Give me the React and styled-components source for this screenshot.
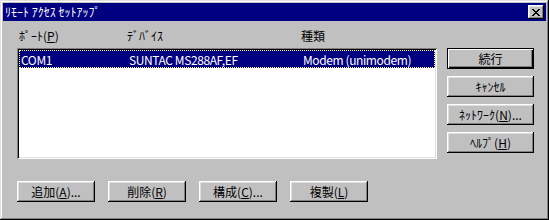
import React from 'react';
import styled, { createGlobalStyle } from 'styled-components';

const GlobalStyle = createGlobalStyle`
  html, body {
    margin: 0;
    padding: 0;
    background: #c0c0c0;
  }
  body {
    font-family: "Noto Sans CJK JP", "Noto Sans", sans-serif;
    font-size: 12px;
    color: #000;
  }
`;

const Window = styled.div`
  width: 549px;
  height: 220px;
  box-sizing: border-box;
  padding: 3px;
  background: #c0c0c0;
  box-shadow: inset -1px -1px #000, inset 1px 1px #dfdfdf,
    inset -2px -2px #808080, inset 2px 2px #fff;
  display: flex;
  flex-direction: column;
`;

const TitleBar = styled.div`
  height: 18px;
  background: #000080;
  color: #fff;
  display: flex;
  align-items: center;
  justify-content: space-between;
  padding: 0 2px;
  line-height: 18px;
`;

const TitleText = styled.span`
  font-size: 12px;
`;

const CloseButton = styled.div`
  width: 16px;
  height: 14px;
  background: #c0c0c0;
  box-shadow: inset -1px -1px #000, inset 1px 1px #fff,
    inset -2px -2px #808080, inset 2px 2px #dfdfdf;
  display: flex;
  align-items: center;
  justify-content: center;
`;

const Body = styled.div`
  padding-left: 14px;
  display: flex;
  flex-direction: column;
`;

const Columns = styled.div`
  display: grid;
  grid-template-columns: 108px 174px 1fr;
  white-space: nowrap;
`;

const Header = styled(Columns)`
  height: 27px;
  box-sizing: border-box;
  padding: 8px 0 0 2px;
  line-height: 14px;
`;

const Main = styled.div`
  display: flex;
  gap: 10px;
`;

const ListBox = styled.div`
  width: 420px;
  height: 111px;
  box-sizing: border-box;
  padding: 2px;
  background: #fff;
  box-shadow: inset 1px 1px #808080, inset -1px -1px #fff,
    inset 2px 2px #000, inset -2px -2px #dfdfdf;
`;

const Row = styled(Columns)`
  height: 18px;
  box-sizing: border-box;
  padding-left: 1px;
  align-items: center;
  letter-spacing: -0.4px;
  background: ${p => (p.selected ? '#000080' : 'transparent')};
  color: ${p => (p.selected ? '#fff' : '#000')};
  border: 1px dotted ${p => (p.selected ? '#ffff80' : 'transparent')};
`;

const SideButtons = styled.div`
  display: flex;
  flex-direction: column;
  gap: 7px;
`;

const Button = styled.div`
  width: ${p => p.width || 87}px;
  height: 21px;
  box-sizing: border-box;
  background: #c0c0c0;
  display: flex;
  align-items: center;
  justify-content: center;
  white-space: nowrap;
  line-height: 14px;
  box-shadow: ${p =>
    p.primary
      ? 'inset 0 0 0 1px #000, inset 2px 2px #fff, inset -2px -2px #000, inset -3px -3px #808080'
      : 'inset -1px -1px #000, inset 1px 1px #fff, inset -2px -2px #808080, inset 2px 2px #dfdfdf'};
`;

const BottomBar = styled.div`
  display: flex;
  gap: 13px;
  margin-top: 22px;
`;

const CloseGlyph = () => (
  <svg width="8" height="7" viewBox="0 0 8 7" shapeRendering="crispEdges">
    <path
      fill="#000"
      d="M0 0h2v1h-2zM6 0h2v1h-2zM1 1h2v1h-2zM5 1h2v1h-2zM2 2h4v1h-4zM3 3h2v1h-2zM2 4h4v1h-4zM1 5h2v1h-2zM5 5h2v1h-2zM0 6h2v1h-2zM6 6h2v1h-2z"
    />
  </svg>
);

const ports = [
  { port: 'COM1', device: 'SUNTAC MS288AF,EF', type: 'Modem (unimodem)', selected: true },
];

export default function App() {
  return (
    <>
      <GlobalStyle />
      <Window>
        <TitleBar>
          <TitleText>ﾘﾓｰﾄ ｱｸｾｽ ｾｯﾄｱｯﾌﾟ</TitleText>
          <CloseButton>
            <CloseGlyph />
          </CloseButton>
        </TitleBar>
        <Body>
          <Header>
            <span>ﾎﾟｰﾄ(<u>P</u>)</span>
            <span>ﾃﾞﾊﾞｲｽ</span>
            <span>種類</span>
          </Header>
          <Main>
            <ListBox>
              {ports.map(item => (
                <Row key={item.port} selected={item.selected}>
                  <span>{item.port}</span>
                  <span>{item.device}</span>
                  <span>{item.type}</span>
                </Row>
              ))}
            </ListBox>
            <SideButtons>
              <Button primary>続行</Button>
              <Button>ｷｬﾝｾﾙ</Button>
              <Button>ﾈｯﾄﾜｰｸ(<u>N</u>)...</Button>
              <Button>ﾍﾙﾌﾟ(<u>H</u>)</Button>
            </SideButtons>
          </Main>
          <BottomBar>
            <Button width={78}>追加(<u>A</u>)...</Button>
            <Button width={78}>削除(<u>R</u>)</Button>
            <Button width={78}>構成(<u>C</u>)...</Button>
            <Button width={78}>複製(<u>L</u>)</Button>
          </BottomBar>
        </Body>
      </Window>
    </>
  );
}
